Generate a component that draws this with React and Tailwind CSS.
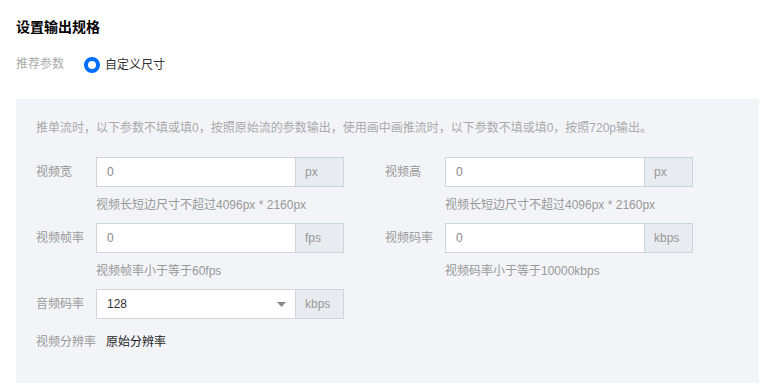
const FONT = { fontFamily: '"Liberation Sans", "Noto Sans CJK SC", sans-serif' };

function Field({ label, value, unit, help, select, dark }) {
  return (
    <div className="flex">
      <div className="w-[60px] h-[30px] flex items-center text-[#999]">{label}</div>
      <div className="flex flex-col w-[248px]">
        <div className="flex h-[30px] border border-[#cfd5de]">
          <div className="flex-1 bg-white flex items-center pl-[10px] pr-[8px] border-r border-[#cfd5de]">
            <span className={dark ? "flex-1 text-[#333]" : "flex-1 text-[#888]"}>{value}</span>
            {select && (
              <svg width="9" height="5" viewBox="0 0 9 5" className="mr-[1px]">
                <path d="M0 0h9L4.5 5z" fill="#888" />
              </svg>
            )}
          </div>
          <div className="w-[47px] bg-[#e8ebf0] flex items-center pl-[9px] text-[#999]">{unit}</div>
        </div>
        {help && <div className="mt-[8px] leading-[20px] text-[#999]">{help}</div>}
      </div>
    </div>
  );
}

export default function App() {
  return (
    <div className="w-[778px] h-[392px] bg-white px-4 pt-[17px] text-[12px]" style={FONT}>
      <div className="text-[14px] leading-[20px] font-bold text-[#000]">设置输出规格</div>

      <div className="flex items-center h-[16px] mt-[20px]">
        <span className="text-[#aaa] w-[68px] -mt-[2px]">推荐参数</span>
        <span className="w-4 h-4 rounded-full border-[4px] border-[#006eff] bg-white" />
        <span className="ml-[5px] text-[#333] -mt-[1px]">自定义尺寸</span>
      </div>

      <div className="mt-[26px] w-[743px] bg-[#f2f4f8] pt-[19px] pl-[20px] pb-[26px]">
        <div className="leading-[20px] text-[#aaa]">
          推单流时，以下参数不填或填0，按照原始流的参数输出，使用画中画推流时，以下参数不填或填0，按照720p输出。
        </div>

        <div className="mt-[19px] flex gap-[41px]">
          <Field label="视频宽" value="0" unit="px" help="视频长短边尺寸不超过4096px * 2160px" />
          <Field label="视频高" value="0" unit="px" help="视频长短边尺寸不超过4096px * 2160px" />
        </div>

        <div className="mt-[8px] flex gap-[41px]">
          <Field label="视频帧率" value="0" unit="fps" help="视频帧率小于等于60fps" />
          <Field label="视频码率" value="0" unit="kbps" help="视频码率小于等于10000kbps" />
        </div>

        <div className="mt-[8px] flex">
          <Field label="音频码率" value="128" unit="kbps" select dark />
        </div>

        <div className="mt-[8px] flex h-[30px] items-center">
          <span className="w-[60px] text-[#999]">视频分辨率</span>
          <span className="pl-[10px] text-[#222]">原始分辨率</span>
        </div>
      </div>
    </div>
  );
}
